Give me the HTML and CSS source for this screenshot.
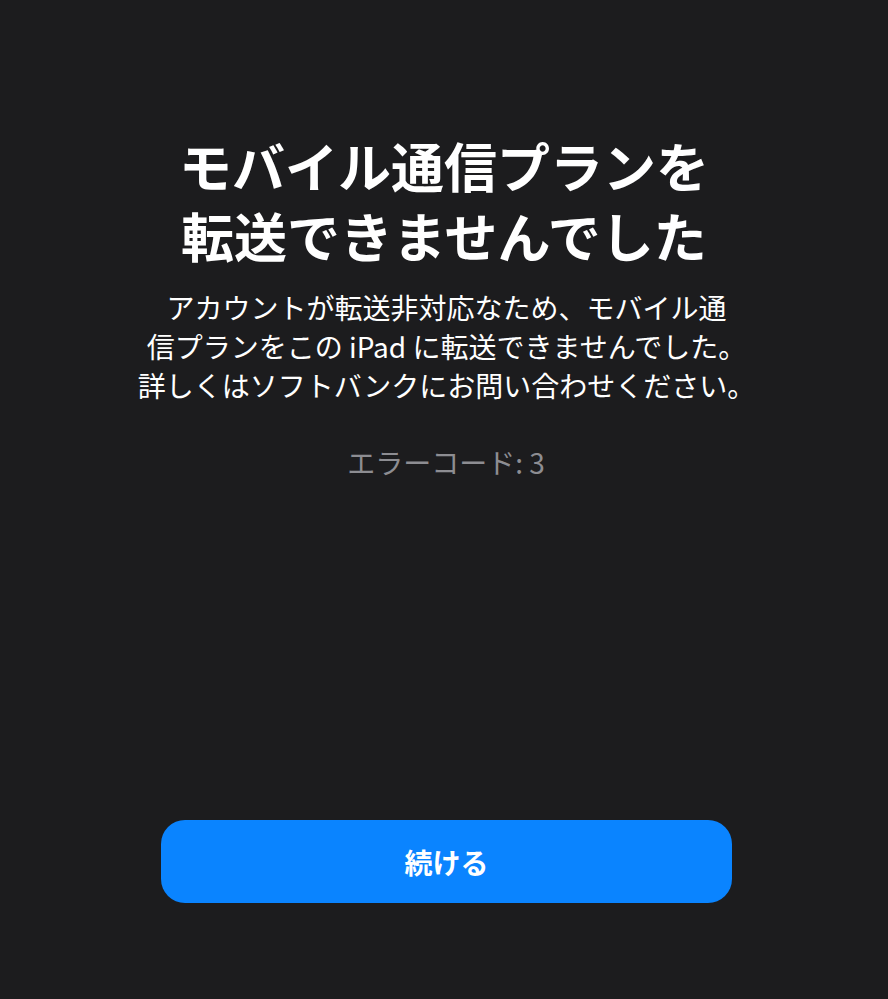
FILE: index.html
```html
<!DOCTYPE html>
<html lang="ja">
<head>
    <meta charset="UTF-8">
    <meta name="viewport" content="width=device-width, initial-scale=1.0">
    <title>モバイル通信プランを転送できませんでした</title>
    <link rel="stylesheet" href="styles.css">
</head>
<body>

    <!-- Message -->
    <main class="message">
        <h1 class="title">モバイル通信プランを<br>転送できませんでした</h1>
        <p class="desc">アカウントが転送非対応なため、モバイル通<br>信プランをこの iPad に転送できませんでした。<br>詳しくはソフトバンクにお問い合わせください。</p>
        <p class="error-code">エラーコード: 3</p>
    </main>

    <!-- Action -->
    <footer class="actions">
        <button class="continue-btn">続ける</button>
    </footer>

</body>
</html>
```

FILE: styles.css
```css
/* Basic Styles */
body {
    font-family: "Noto Sans CJK JP", "Noto Sans", sans-serif;
    margin: 0;
    padding: 0;
    background-color: #1c1c1e;
    color: #fff;
    height: 999px;
    display: flex;
    flex-direction: column;
}

/* Message */
.message {
    padding-top: 130px;
    text-align: center;
    flex: 1;
}

.title {
    font-size: 53px;
    font-weight: 700;
    line-height: 70px;
    margin: 0;
}

.desc {
    font-size: 28px;
    line-height: 39px;
    margin: 18px 0 0;
    padding-left: 5px;
}

.error-code {
    font-size: 28px;
    line-height: 39px;
    color: #8d8d92;
    margin: 38px 0 0;
    padding-left: 4px;
}

/* Action */
.actions {
    display: flex;
    justify-content: center;
    padding: 0 0 96px 5px;
}

.continue-btn {
    width: 571px;
    height: 83px;
    background-color: #0a84ff;
    color: #fff;
    border: none;
    border-radius: 24px;
    font-family: inherit;
    font-size: 28px;
    font-weight: 700;
    cursor: pointer;
}
```
